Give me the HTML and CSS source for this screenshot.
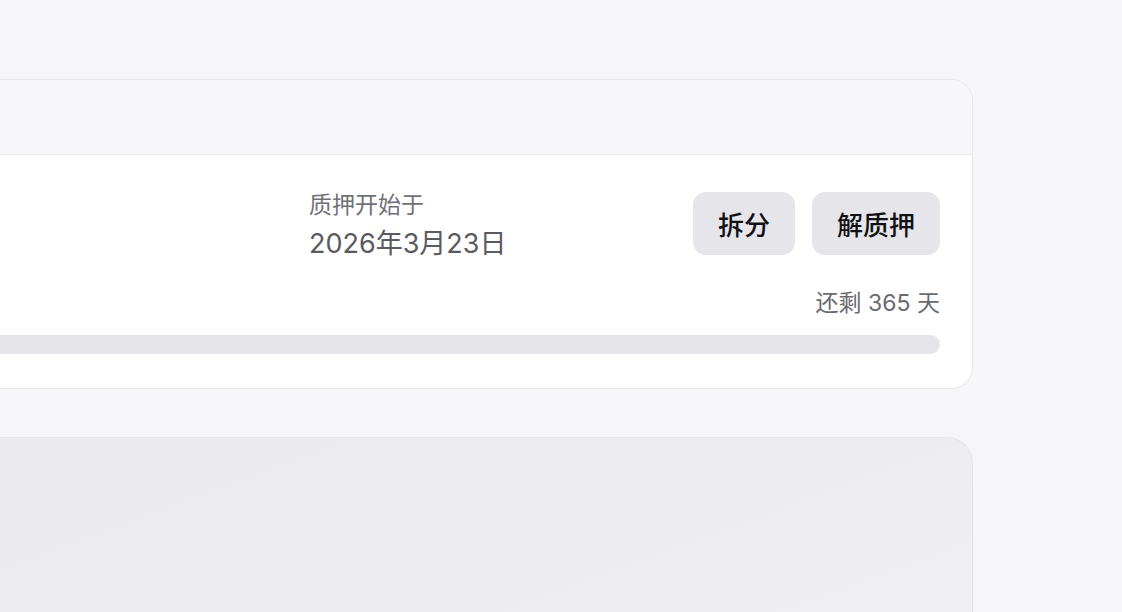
FILE: index.html
```html
<!DOCTYPE html>
<html lang="zh-CN">
<head>
    <meta charset="UTF-8">
    <meta name="viewport" content="width=device-width, initial-scale=1.0">
    <title>质押详情</title>
    <link rel="stylesheet" href="styles.css">
</head>
<body>
    <div class="page">
        <section class="stake-card">
            <div class="stake-header"></div>
            <div class="stake-body">
                <div class="stake-row">
                    <div class="stake-left"></div>
                    <div class="stake-info">
                        <div class="info-label">质押开始于</div>
                        <div class="info-value">2026年3月23日</div>
                    </div>
                    <div class="stake-actions">
                        <button class="btn">拆分</button>
                        <button class="btn">解质押</button>
                    </div>
                </div>
                <div class="remaining">还剩 365 天</div>
                <div class="progress">
                    <div class="progress-fill" style="width: 0%"></div>
                </div>
            </div>
        </section>

        <section class="next-card"></section>
    </div>
</body>
</html>
```

FILE: styles.css
```css
* {
    box-sizing: border-box;
}

body {
    margin: 0;
    background-color: #f6f6f8;
    font-family: Inter, "Noto Sans CJK SC", sans-serif;
    color: #1c1c1e;
    overflow: hidden;
}

.page {
    padding-top: 79px;
    display: flex;
    flex-direction: column;
    gap: 48px;
}

.stake-card {
    width: 1400px;
    margin-left: -427px;
    background: #ffffff;
    border: 1px solid #e8e8ec;
    border-radius: 22px;
    overflow: hidden;
}

.stake-header {
    height: 75px;
    background-color: #f7f7f9;
    border-bottom: 1px solid #ebebef;
}

.stake-body {
    padding: 37px 32px 34px;
}

.stake-row {
    display: flex;
    align-items: flex-start;
}

.stake-left {
    flex: 1;
}

.stake-info {
    flex: 0 0 384px;
    padding-top: 1px;
}

.info-label {
    font-size: 23px;
    line-height: 24px;
    color: #707076;
}

.info-value {
    margin-top: 12px;
    font-size: 27px;
    line-height: 30px;
    color: #5a5a60;
}

.stake-actions {
    display: flex;
    gap: 17px;
}

.btn {
    height: 63px;
    padding: 0 25px;
    border: none;
    border-radius: 13px;
    background-color: #e5e5ea;
    color: #111113;
    font-family: inherit;
    font-size: 26px;
    font-weight: 500;
    cursor: pointer;
}

.remaining {
    margin-top: 29px;
    text-align: right;
    font-size: 23px;
    line-height: 30px;
    color: #6a6a70;
}

.progress {
    margin-top: 17px;
    height: 19px;
    border-radius: 10px;
    background-color: #e5e5ea;
    overflow: hidden;
}

.progress-fill {
    height: 100%;
    background-color: #1c1c1e;
}

.next-card {
    width: 1400px;
    height: 260px;
    margin-left: -427px;
    border: 1px solid #e4e4e8;
    border-radius: 26px;
    background: linear-gradient(160deg, #e9e9ee 0%, #ededf0 60%, #f0f0f2 100%);
}
```
